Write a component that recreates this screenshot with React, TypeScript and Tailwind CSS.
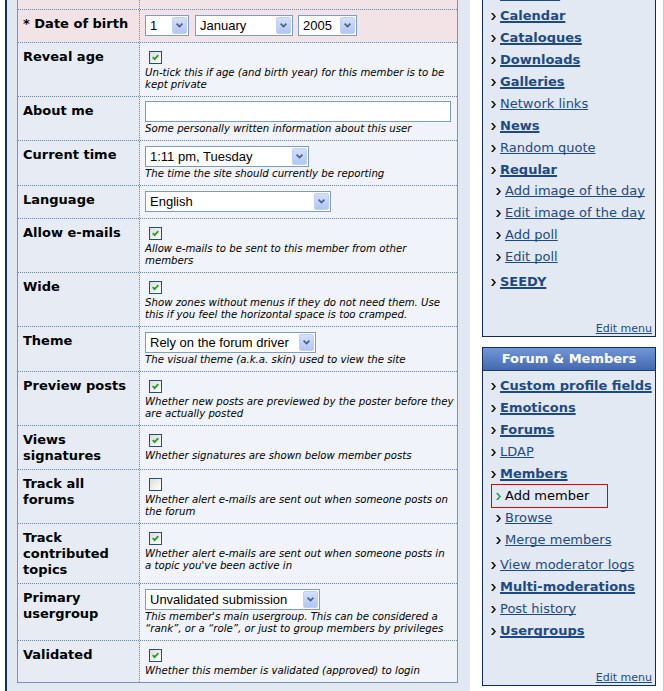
import React from 'react';

type Field =
  | { kind: 'check'; checked: boolean }
  | { kind: 'select'; value: string; w: string }
  | { kind: 'dob' }
  | { kind: 'input'; w: string };

type Row = { label: string[]; pink?: boolean; field?: Field; desc?: string[]; cut?: boolean };

const ROWS: Row[] = [
  { label: ['Address'], pink: true, cut: true },
  { label: ['* Date of birth'], pink: true, field: { kind: 'dob' } },
  { label: ['Reveal age'], field: { kind: 'check', checked: true }, desc: ['Un-tick this if age (and birth year) for this member is to be', 'kept private'] },
  { label: ['About me'], field: { kind: 'input', w: 'w-[306px]' }, desc: ['Some personally written information about this user'] },
  { label: ['Current time'], field: { kind: 'select', value: '1:11 pm, Tuesday', w: 'w-[164px]' }, desc: ['The time the site should currently be reporting'] },
  { label: ['Language'], field: { kind: 'select', value: 'English', w: 'w-[186px]' } },
  { label: ['Allow e-mails'], field: { kind: 'check', checked: true }, desc: ['Allow e-mails to be sent to this member from other', 'members'] },
  { label: ['Wide'], field: { kind: 'check', checked: true }, desc: ['Show zones without menus if they do not need them. Use', 'this if you feel the horizontal space is too cramped.'] },
  { label: ['Theme'], field: { kind: 'select', value: 'Rely on the forum driver', w: 'w-[171px]' }, desc: ['The visual theme (a.k.a. skin) used to view the site'] },
  { label: ['Preview posts'], field: { kind: 'check', checked: true }, desc: ['Whether new posts are previewed by the poster before they', 'are actually posted'] },
  { label: ['Views', 'signatures'], field: { kind: 'check', checked: true }, desc: ['Whether signatures are shown below member posts'] },
  { label: ['Track all', 'forums'], field: { kind: 'check', checked: false }, desc: ['Whether alert e-mails are sent out when someone posts on', 'the forum'] },
  { label: ['Track', 'contributed', 'topics'], field: { kind: 'check', checked: true }, desc: ['Whether alert e-mails are sent out when someone posts in', "a topic you've been active in"] },
  { label: ['Primary', 'usergroup'], field: { kind: 'select', value: 'Unvalidated submission', w: 'w-[175px]' }, desc: ["This member's main usergroup. This can be considered a", '\u201crank\u201d, or a \u201crole\u201d, or just to group members by privileges'] },
  { label: ['Validated'], field: { kind: 'check', checked: true }, desc: ['Whether this member is validated (approved) to login'] },
];

type Item = { label: string; bold?: boolean; active?: boolean; sub?: Item[] };

const CONTENT_MENU: Item[] = [
  { label: 'Banners', bold: true },
  { label: 'Calendar', bold: true },
  { label: 'Catalogues', bold: true },
  { label: 'Downloads', bold: true },
  { label: 'Galleries', bold: true },
  { label: 'Network links' },
  { label: 'News', bold: true },
  { label: 'Random quote' },
  {
    label: 'Regular', bold: true,
    sub: [{ label: 'Add image of the day' }, { label: 'Edit image of the day' }, { label: 'Add poll' }, { label: 'Edit poll' }],
  },
  { label: 'SEEDY', bold: true },
];

const FORUM_MENU: Item[] = [
  { label: 'Custom profile fields', bold: true },
  { label: 'Emoticons', bold: true },
  { label: 'Forums', bold: true },
  { label: 'LDAP' },
  {
    label: 'Members', bold: true,
    sub: [{ label: 'Add member', active: true }, { label: 'Browse' }, { label: 'Merge members' }],
  },
  { label: 'View moderator logs' },
  { label: 'Multi-moderations', bold: true },
  { label: 'Post history' },
  { label: 'Usergroups', bold: true },
];

const DropButton = () => (
  <span className="my-[1px] mr-[1px] flex h-[17px] w-[15px] shrink-0 items-center justify-center rounded-[2px] border border-[#bfd0f6] bg-linear-to-b from-[#d3e0fd] to-[#b2c6f3]">
    <svg width="7" height="5" viewBox="0 0 7 5">
      <path d="M0.6 0.6 L3.5 3.6 L6.4 0.6" stroke="#4d6185" strokeWidth="1.7" fill="none" />
    </svg>
  </span>
);

const FakeSelect = ({ value, w }: { value: string; w: string }) => (
  <div className={`${w} flex h-[21px] items-center border border-[#7f9db9] bg-white pl-[4px] font-['Liberation_Sans',Arial,sans-serif] text-[13px] text-black`}>
    <span className="flex-1 truncate whitespace-nowrap">{value}</span>
    <DropButton />
  </div>
);

const CheckBox = ({ checked }: { checked: boolean }) => (
  <div className="mt-[4px] mb-[3px] ml-[4px] flex h-[13px] w-[13px] items-center justify-center border border-[#1c5180] bg-linear-to-br from-[#dcdcd7] to-white">
    {checked && (
      <svg width="7" height="7" viewBox="0 0 7 7">
        <path d="M0.7 3.2 L2.6 5.2 L6.3 1.2" stroke="#21a121" strokeWidth="1.8" fill="none" />
      </svg>
    )}
  </div>
);

const FieldView = ({ field }: { field: Field }) => {
  switch (field.kind) {
    case 'check':
      return <CheckBox checked={field.checked} />;
    case 'input':
      return <div className={`${field.w} mb-[1px] h-[21px] border border-[#7f9db9] bg-white`} />;
    case 'select':
      return <div className="my-[1px]"><FakeSelect value={field.value} w={field.w} /></div>;
    case 'dob':
      return (
        <div className="my-[1px] flex">
          <FakeSelect value="1" w="w-[44px]" />
          <div className="ml-[6px]"><FakeSelect value="January" w="w-[98px]" /></div>
          <div className="ml-[5px]"><FakeSelect value="2005" w="w-[59px]" /></div>
        </div>
      );
  }
};

const FormRow = ({ row, first }: { row: Row; first: boolean }) => {
  const labelBg = row.pink ? 'bg-[#f2e3e6]' : 'bg-[#e6ebf4]';
  const valueBg = row.pink ? 'bg-[#f2e3e6]' : 'bg-[#f0f3f9]';
  return (
    <div className={`flex ${first ? '' : 'border-t border-dotted border-[#6f87b0]'} ${row.cut ? 'h-[28px] overflow-hidden' : ''}`}>
      <div className={`w-[122px] shrink-0 border-r border-dotted border-[#6f87b0] ${labelBg} px-[5px] pt-[6px] pb-[5px] font-['DejaVu_Sans',Verdana,sans-serif] text-[13px] leading-[16px] font-bold text-black`}>
        {row.label.map(l => (
          <div key={l} className="whitespace-nowrap">{l}</div>
        ))}
      </div>
      <div className={`min-w-0 flex-1 ${valueBg} px-[5px] pt-[4px] pb-[5px]`}>
        {row.field && <FieldView field={row.field} />}
        {row.desc && (
          <div className="font-['DejaVu_Sans',Verdana,sans-serif] text-[10.2px] leading-[12px] text-black italic">
            {row.desc.map(d => (
              <div key={d} className="whitespace-nowrap">{d}</div>
            ))}
          </div>
        )}
      </div>
    </div>
  );
};

const Bullet = ({ green }: { green?: boolean }) => (
  <svg width="5" height="7" viewBox="0 0 5 7" className="mr-[4px] mt-[1px] shrink-0">
    <polygon points="0,0 2,0 5,3.5 2,7 0,7 3,3.5" fill={green ? '#1aa14a' : '#111111'} />
  </svg>
);

const linkCls = (bold?: boolean) =>
  `text-[#1d4a86] underline [text-decoration-skip-ink:none] whitespace-nowrap ${bold ? 'font-bold decoration-2' : 'decoration-1'}`;

const MenuItem = ({ item }: { item: Item }) => (
  <li>
    <div className="flex h-[22px] items-center">
      <Bullet />
      <span className={linkCls(item.bold)}>{item.label}</span>
    </div>
    {item.sub && (
      <ul className="-mt-[1px] mb-[3px]">
        {item.sub.map(s =>
          s.active ? (
            <li key={s.label} className="-my-[1px] flex h-[24px] w-[117px] items-center border border-[#e00000] pl-[4px]">
              <Bullet green />
              <span className="whitespace-nowrap text-black">{s.label}</span>
            </li>
          ) : (
            <li key={s.label} className="flex h-[22px] items-center pl-[5px]">
              <Bullet />
              <span className={linkCls(false)}>{s.label}</span>
            </li>
          )
        )}
      </ul>
    )}
  </li>
);

const MenuPanel = ({ title, items }: { title: string; items: Item[] }) => (
  <div className="w-[174px] border border-[#0f2b5f] bg-[#e3e9f3] font-['DejaVu_Sans',Verdana,sans-serif] text-[13px]">
    <div className="h-[23px] border-b border-[#1d3b74] bg-linear-to-b from-[#7197d8] to-[#4469ae] text-center text-[13px] leading-[21px] font-bold text-white">
      {title}
    </div>
    <ul className="pt-[4px] pl-[8px]">
      {items.map(i => (
        <MenuItem key={i.label} item={i} />
      ))}
    </ul>
    <div className="mt-[28px] pr-[3px] text-right text-[11px] leading-[15px]">
      <span className="text-[#1d4a86] underline decoration-1">Edit menu</span>
    </div>
  </div>
);

export default function App() {
  return (
    <div className="flex h-[691px] w-[664px] overflow-hidden bg-white">
      <main className="ml-[5px] w-[465px] shrink-0 border-l-2 border-[#14306a] bg-[#e2e8f1] pl-[10px]">
        <div className="-mt-[20px] w-[441px] border border-[#7d93b5]">
          {ROWS.map((r, i) => (
            <FormRow key={r.label.join(' ')} row={r} first={i === 0} />
          ))}
        </div>
      </main>
      <aside className="flex-1 border-r border-[#c8c8c8] bg-white pl-[12px]">
        <div className="-mt-[45px] flex flex-col gap-[10px]">
          <MenuPanel title="Content" items={CONTENT_MENU} />
          <MenuPanel title="Forum & Members" items={FORUM_MENU} />
        </div>
      </aside>
    </div>
  );
}
